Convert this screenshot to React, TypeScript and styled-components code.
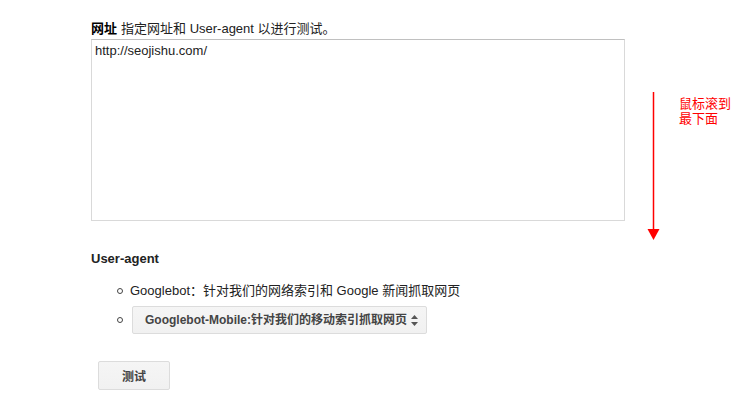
import React from 'react'
import styled, { createGlobalStyle } from 'styled-components'

const GlobalStyle = createGlobalStyle`
body {
  margin: 0;
  background: #ffffff;
  font-family: "Liberation Sans", Arial, "Noto Sans CJK SC", sans-serif;
  color: #222;
}
`

const Page = styled.div`
display: flex;
align-items: flex-start;
padding: 19px 0 0 91px;
`

const Main = styled.div`
width: 534px;
display: flex;
flex-direction: column;
`

const LabelLine = styled.div`
font-size: 13px;
line-height: 20px;
height: 20px;
color: #222;
`

const Strong = styled.b`
font-weight: bold;
color: #000;
margin-right: 4px;
`

const UrlBox = styled.textarea`
box-sizing: border-box;
width: 534px;
height: 182px;
margin: 0;
padding: 3px 3px;
border: 1px solid #d9d9d9;
border-top-color: #c0c0c0;
font-family: "Liberation Sans", Arial, sans-serif;
font-size: 13px;
line-height: 16px;
color: #222;
resize: none;
outline: none;
`

const Heading = styled.div`
margin-top: 30px;
font-size: 13px;
font-weight: bold;
line-height: 16px;
color: #222;
`

const AgentList = styled.ul`
list-style: none;
margin: 16px 0 0 0;
padding: 0;
display: flex;
flex-direction: column;
gap: 7px;
`

const AgentItem = styled.li<{ $gap: number }>`
display: flex;
align-items: center;
padding-left: 26px;
font-size: 13px;
line-height: 16px;
color: #222;
&::before {
  content: '';
  box-sizing: border-box;
  width: 6px;
  height: 6px;
  border: 1px solid #444;
  border-radius: 50%;
  margin-right: ${(p) => p.$gap}px;
}
`

const FakeSelect = styled.div`
box-sizing: border-box;
width: 295px;
height: 28px;
display: flex;
align-items: center;
justify-content: space-between;
padding: 0 7px 0 12px;
border: 1px solid #dcdcdc;
border-radius: 2px;
background: linear-gradient(#f5f5f5, #f1f1f1);
font-family: "Liberation Sans", Arial, "Noto Sans CJK SC", sans-serif;
font-size: 12px;
font-weight: bold;
color: #444;
`

const SubmitButton = styled.button`
box-sizing: border-box;
width: 72px;
height: 29px;
margin: 27px 0 0 7px;
border: 1px solid #dcdcdc;
border-radius: 2px;
background: linear-gradient(#f5f5f5, #f1f1f1);
font-family: "Noto Sans CJK SC", sans-serif;
font-size: 12px;
font-weight: bold;
color: #444;
`

const Annotation = styled.div`
display: flex;
align-items: flex-start;
margin-left: 22px;
margin-top: 73px;
`

const Note = styled.div`
margin-left: 19px;
margin-top: 4px;
display: flex;
flex-direction: column;
`

const NoteLine = styled.div`
height: 15px;
font-family: "Liberation Sans", "Noto Sans CJK SC", sans-serif;
font-size: 13px;
line-height: 15px;
color: #ff0000;
white-space: nowrap;
`

const Arrow = () => (
  <svg width="13" height="149" viewBox="0 0 13 149">
    <line x1="6.5" y1="0" x2="6.5" y2="140" stroke="#ff0000" strokeWidth="1.5" />
    <polygon points="0.5,137 12.5,137 6.5,148" fill="#ff0000" />
  </svg>
)

const UpDown = () => (
  <svg width="9" height="13" viewBox="0 0 9 13">
    <polygon points="4.5,1 8,5 1,5" fill="#555" />
    <polygon points="1,8 8,8 4.5,12" fill="#555" />
  </svg>
)

export default function App() {
  return (
    <>
      <GlobalStyle />
      <Page>
        <Main>
          <LabelLine>
            <Strong>网址</Strong>指定网址和 User-agent 以进行测试。
          </LabelLine>
          <UrlBox defaultValue="http://seojishu.com/" />
          <Heading>User-agent</Heading>
          <AgentList>
            <AgentItem $gap={7}>Googlebot：针对我们的网络索引和 Google 新闻抓取网页</AgentItem>
            <AgentItem $gap={9}>
              <FakeSelect>
                <span>Googlebot-Mobile:针对我们的移动索引抓取网页</span>
                <UpDown />
              </FakeSelect>
            </AgentItem>
          </AgentList>
          <div>
            <SubmitButton>测试</SubmitButton>
          </div>
        </Main>
        <Annotation>
          <Arrow />
          <Note>
            <NoteLine>鼠标滚到</NoteLine>
            <NoteLine>最下面</NoteLine>
          </Note>
        </Annotation>
      </Page>
    </>
  )
}
